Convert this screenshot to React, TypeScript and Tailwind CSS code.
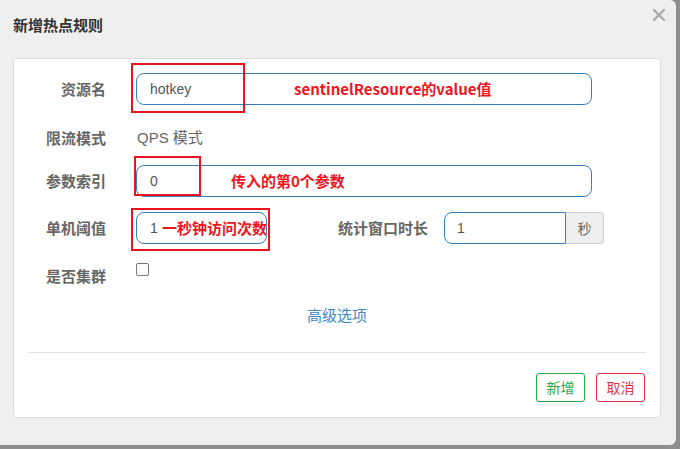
import React from "react";

const font = { fontFamily: '"Noto Sans CJK SC", "Liberation Sans", sans-serif' };
const latin = { fontFamily: '"Liberation Sans", "Noto Sans CJK SC", sans-serif' };

function Label({ text }: { text: string }) {
  return (
    <div className="w-[92px] shrink-0 text-right text-[15px] font-bold text-[#666] leading-[32px]">
      {text}
    </div>
  );
}

function Mark({ className }: { className: string }) {
  return <div className={`absolute border-2 border-[#e8151f] pointer-events-none ${className}`} />;
}

function Note({ text, className }: { text: string; className: string }) {
  return (
    <div className={`absolute top-0 h-[32px] leading-[32px] text-[15px] font-bold text-[#f0141e] whitespace-nowrap ${className}`}>
      {text}
    </div>
  );
}

export default function App() {
  return (
    <div className="w-[680px] h-[449px] bg-[#8e8e8e] overflow-hidden" style={font}>
      <div className="w-[676px] h-[445px] bg-[#efefef] rounded-tr-[6px] rounded-br-[6px] flex flex-col">
        {/* header */}
        <div className="h-[58px] shrink-0 flex items-start justify-between pl-[13px] pr-[11px]">
          <div className="mt-[14px] text-[15px] leading-[22px] font-bold text-[#333]">新增热点规则</div>
          <svg width="12" height="12" viewBox="0 0 12 12" className="mt-[9px]">
            <path d="M1 1L11 11M11 1L1 11" stroke="#ababab" strokeWidth="2.4" strokeLinecap="square" />
          </svg>
        </div>

        {/* body card */}
        <div className="ml-[13px] w-[648px] h-[360px] bg-white border border-[#dcdcdc] rounded-[4px] flex flex-col">
          {/* 资源名 */}
          <div className="flex mt-[14px] h-[32px]">
            <Label text="资源名" />
            <div className="relative ml-[30px] w-[456px] h-[32px]">
              <div className="h-full border border-[#3a7fc0] rounded-[8px] pl-[13px] text-[14px] leading-[30px] text-[#555]" style={latin}>hotkey</div>
              <Mark className="-left-[5px] -top-[10px] w-[114px] h-[50px]" />
              <Note text="sentinelResource的value值" className="left-[158px]" />
            </div>
          </div>

          {/* 限流模式 */}
          <div className="flex mt-[17px] h-[32px]">
            <Label text="限流模式" />
            <div className="ml-[31px] text-[15px] leading-[32px] text-[#666]" style={latin}>QPS 模式</div>
          </div>

          {/* 参数索引 */}
          <div className="flex mt-[11px] h-[32px]">
            <Label text="参数索引" />
            <div className="relative ml-[30px] w-[456px] h-[32px]">
              <div className="h-full border border-[#3a7fc0] rounded-[8px] pl-[13px] text-[14px] leading-[30px] text-[#555]" style={latin}>0</div>
              <Mark className="-left-[2px] -top-[9px] w-[67px] h-[40px]" />
              <Note text="传入的第0个参数" className="left-[95px]" />
            </div>
          </div>

          {/* 单机阈值 / 统计窗口时长 */}
          <div className="flex mt-[15px] h-[32px]">
            <Label text="单机阈值" />
            <div className="relative ml-[30px] w-[131px] h-[32px]">
              <div className="h-full border border-[#3a7fc0] rounded-[8px] pl-[13px] text-[14px] leading-[30px] text-[#555]" style={latin}>1</div>
              <Mark className="-left-[5px] -top-[4px] w-[139px] h-[43px]" />
              <Note text="一秒钟访问次数" className="left-[26px]" />
            </div>
            <div className="ml-[71px] text-[15px] font-bold text-[#666] leading-[32px]">统计窗口时长</div>
            <div className="ml-[16px] flex h-[32px]">
              <div className="w-[122px] border border-[#3a7fc0] rounded-l-[8px] pl-[12px] text-[14px] leading-[30px] text-[#555]" style={latin}>1</div>
              <div className="w-[38px] bg-[#eeeeee] border border-l-0 border-[#cccccc] rounded-r-[4px] text-center text-[14px] leading-[30px] text-[#666]">秒</div>
            </div>
          </div>

          {/* 是否集群 */}
          <div className="flex mt-[16px] h-[32px]">
            <Label text="是否集群" />
            <div className="ml-[30px] mt-[3px] w-[13px] h-[13px] border border-[#777] rounded-[2px] bg-white" />
          </div>

          {/* 高级选项 */}
          <div className="mt-[12px] text-center text-[15px] leading-[22px] text-[#3c86c6]">高级选项</div>

          {/* divider */}
          <div className="mx-[14px] mt-[26px] h-px bg-[#e3e3e3]" />

          {/* footer buttons */}
          <div className="flex justify-end gap-[11px] pr-[15px] mt-[20px]">
            <div className="w-[49px] h-[29px] border border-[#2aa74a] rounded-[3px] text-center text-[14px] leading-[27px] text-[#2aa74a]">新增</div>
            <div className="w-[49px] h-[29px] border border-[#dc3545] rounded-[3px] text-center text-[14px] leading-[27px] text-[#dc3545]">取消</div>
          </div>
        </div>
      </div>
    </div>
  );
}
